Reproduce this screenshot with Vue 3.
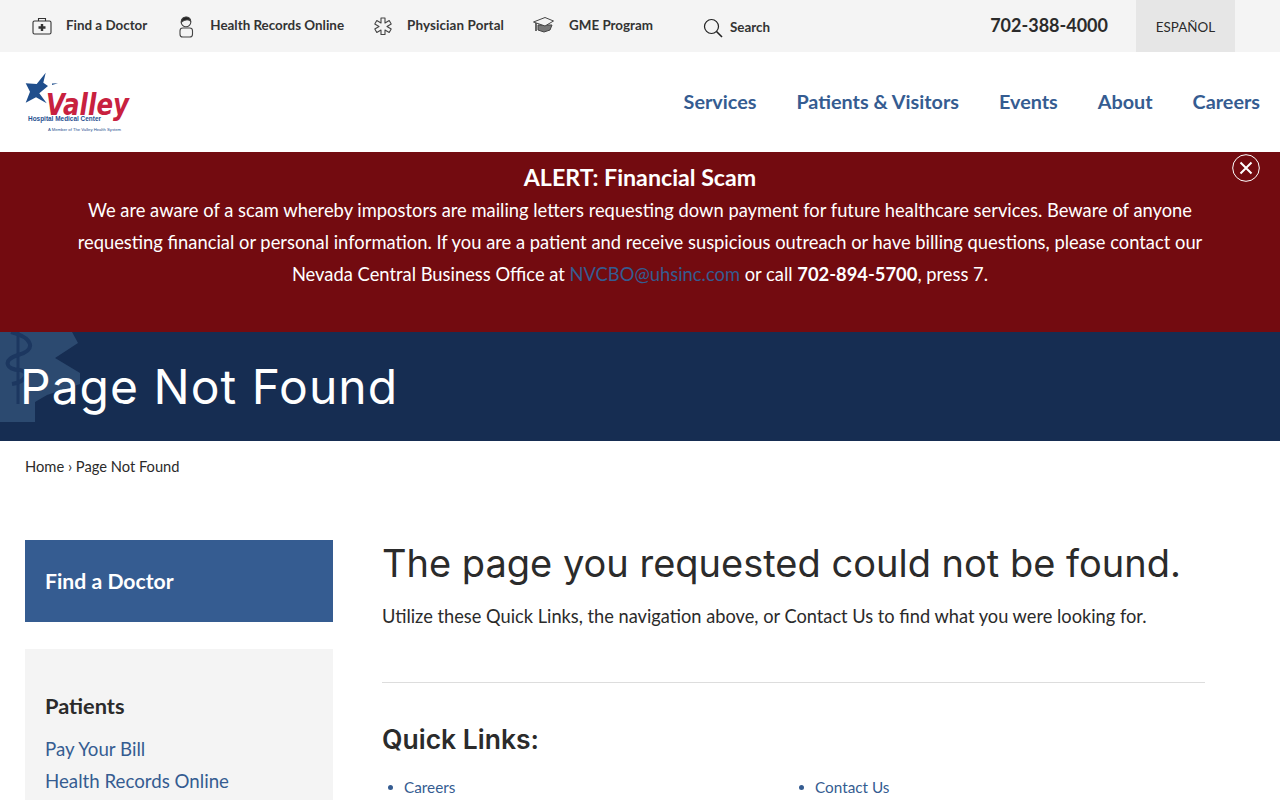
<template>
  <div class="page">
    <div class="topbar">
      <nav class="utility">
        <a class="util-link doctor">
          <svg width="22" height="22" viewBox="0 0 22 22" fill="none" stroke="#333" stroke-width="1.1">
            <rect x="2" y="6" width="18" height="13" rx="1.5" />
            <path d="M7.500 6V3.500h7V6" />
            <path d="M11 9v7M7.500 12.500h7" stroke-width="2.400" />
          </svg>
          <span>Find a Doctor</span>
        </a>
        <a class="util-link records">
          <svg width="22" height="24" viewBox="0 0 22 24" fill="none" stroke="#444" stroke-width="1.100">
            <circle cx="11" cy="8" r="4.800" />
            <path d="M6.400 8C6.500 1.500 15.500 1.500 15.600 7 13 5 9 6 6.400 8Z" fill="#222" />
            <rect x="5" y="14" width="12.500" height="9" rx="2.800" />
          </svg>
          <span>Health Records Online</span>
        </a>
        <a class="util-link portal">
          <svg width="20" height="20" viewBox="0 0 20 20" fill="none" stroke="#444" stroke-width="1.100" stroke-linejoin="round">
            <path d="M8 2h4v5l4.200-2.500 2 3.500L14 10.500l4.200 2.500-2 3.500L12 14v4.500H8V14l-4.200 2.500-2-3.500L6 10.500 1.800 8l2-3.500L8 7Z" />
          </svg>
          <span>Physician Portal</span>
        </a>
        <a class="util-link gme">
          <svg width="22" height="18" viewBox="0 0 22 18" fill="none" stroke="#444" stroke-width="1">
            <path d="M6 8v5l6 2 6-2 2-5Z" fill="#777" />
            <path d="M1.500 5 13 .5 21.500 4 13 9Z" fill="#f4f4f4" />
            <path d="M4 6v8" stroke-width="1.600" />
          </svg>
          <span>GME Program</span>
        </a>
        <a class="util-link search">
          <svg width="20" height="20" viewBox="0 0 20 20" fill="none" stroke="#222" stroke-width="1.200">
            <circle cx="8.500" cy="8.500" r="7" />
            <path d="M13.500 13.500 19 19" stroke-width="1.600" />
          </svg>
          <span>Search</span>
        </a>
      </nav>
      <div class="top-right">
        <a class="phone">702-388-4000</a>
        <a class="lang">ESPAÑOL</a>
      </div>
    </div>

    <header class="mainbar">
      <svg class="logo" width="106" height="62" viewBox="0 0 106 62">
        <path d="M20.700 1.700 18.300 11.700 23 15 14.300 22.300 21.700 32.300 11 26.300.7 31.700 5 20.700.7 12.300 11.700 13Z" fill="#1f4e8c" />
        <path d="M27 12.500 33 12.300 27 14Z" fill="#1f4e8c" />
        <text x="21" y="44" class="logo-name" textLength="83" lengthAdjust="spacingAndGlyphs">Valley</text>
        <text x="3" y="49.500" class="logo-sub" textLength="73" lengthAdjust="spacingAndGlyphs">Hospital Medical Center</text>
        <text x="23" y="59.500" class="logo-small" textLength="73" lengthAdjust="spacingAndGlyphs">A Member of The Valley Health System</text>
      </svg>
      <nav class="mainnav">
        <a v-for="item in navItems" :key="item">{{ item }}</a>
      </nav>
    </header>

    <section class="alert">
      <h2>ALERT: Financial Scam</h2>
      <p>
        We are aware of a scam whereby impostors are mailing letters requesting down payment for future
        healthcare services. Beware of anyone requesting financial or personal information. If you are a
        patient and receive suspicious outreach or have billing questions, please contact our Nevada Central
        Business Office at <a class="mail">NVCBO@uhsinc.com</a> or call <strong>702-894-5700</strong>, press 7.
      </p>
      <button class="close" aria-label="Close">
        <svg width="28" height="28" viewBox="0 0 28 28" fill="none" stroke="#fff">
          <circle cx="14" cy="14" r="13.300" stroke-width="1" />
          <path d="M8.500 8.500l11 11M19.500 8.500l-11 11" stroke-width="2" />
        </svg>
      </button>
    </section>

    <section class="titlebar">
      <svg class="star" width="82" height="92" viewBox="0 0 82 92">
        <path d="M0 0H72L78 11 55 26 80 41V52L47 63 35 70V90H0Z" fill="#2c4a70" />
        <path d="M18 0V72" stroke="#1c3760" stroke-width="3" />
        <path d="M11 0C34 6 36 18 18 23 2 28 6 38 20 38 30 40 26 50 12 52" fill="none" stroke="#1c3760" stroke-width="4" />
      </svg>
      <h1>Page Not Found</h1>
    </section>

    <div class="crumbs">Home › Page Not Found</div>

    <div class="content">
      <aside class="side">
        <a class="side-cta">Find a Doctor</a>
        <div class="side-box">
          <h3>Patients</h3>
          <a v-for="link in patientLinks" :key="link">{{ link }}</a>
        </div>
      </aside>
      <main class="body">
        <h2 class="headline">The page you requested could not be found.</h2>
        <p class="lead">Utilize these Quick Links, the navigation above, or Contact Us to find what you were looking for.</p>
        <hr />
        <h3 class="quick">Quick Links:</h3>
        <ul class="links">
          <li v-for="link in quickLinks" :key="link"><a>{{ link }}</a></li>
        </ul>
      </main>
    </div>
  </div>
</template>

<script setup>
const navItems = ['Services', 'Patients & Visitors', 'Events', 'About', 'Careers']
const patientLinks = ['Pay Your Bill', 'Health Records Online']
const quickLinks = ['Careers', 'Contact Us']
</script>

<style>
html, body { margin: 0; overflow: hidden; }
</style>

<style scoped>
.page {
  height: 800px;
  overflow: hidden;
  font-family: "Lato", "Noto Sans", sans-serif;
  color: #2b2b2b;
  background: #fff;
}
a { text-decoration: none; color: inherit; }

.topbar {
  height: 52px;
  background: #f4f4f4;
  display: flex;
  justify-content: space-between;
}
.utility { display: flex; align-items: center; padding-left: 31px; }
.util-link {
  display: flex;
  align-items: center;
  font-size: 13.400px;
  font-weight: 700;
  color: #333;
  margin-right: 28px;
  white-space: nowrap;
}
.util-link span { margin-left: 13px; margin-top: -3px; }
.records { margin-right: 29px; }
.portal span { margin-left: 14px; letter-spacing: 0.12px; }
.gme { margin-right: 50px; }
.gme span { margin-left: 15px; }
.search { padding-top: 3px; margin-right: 0; }
.search span { margin-left: 7px; margin-top: -1px; }
.top-right { display: flex; align-items: stretch; margin-right: 45px; }
.phone { font-size: 18px; font-weight: 700; line-height: 51px; margin-right: 28px; }
.lang {
  width: 99px;
  background: #e6e6e6;
  font-size: 13.400px;
  line-height: 54px;
  text-align: center;
}

.mainbar {
  height: 100px;
  display: flex;
  justify-content: space-between;
  align-items: center;
  padding: 0 20px 0 25px;
}
.logo { overflow: visible; }
.logo-name { font: italic 700 30px "DejaVu Sans", sans-serif; fill: #c8213f; }
.logo-sub { font: 700 6.500px "Liberation Sans", sans-serif; fill: #27508f; }
.logo-small { font: 4px "Liberation Sans", sans-serif; fill: #27508f; }
.mainnav { display: flex; gap: 40px; margin-top: -2px; }
.mainnav a { font-size: 19.800px; font-weight: 700; color: #355c91; white-space: nowrap; }

.alert {
  position: relative;
  height: 180px;
  box-sizing: border-box;
  padding: 10px 70px 0;
  background: #730b10;
  color: #fff;
  text-align: center;
}
.alert h2 { margin: -1px 0 1px; font-size: 23.200px; font-weight: 700; line-height: 32px; }
.alert p { margin: 0 auto; font-size: 18.350px; line-height: 32px; }
.mail { color: #355c91; }
.close {
  position: absolute;
  top: 2px;
  right: 20px;
  padding: 0;
  background: none;
  border: 0;
  line-height: 0;
}

.titlebar {
  position: relative;
  height: 109px;
  background: #162d52;
  overflow: hidden;
  display: flex;
  align-items: center;
  padding-left: 20px;
}
.star { position: absolute; left: 0; top: 0; }
.titlebar h1 {
  position: relative;
  margin: 0;
  font-family: "Inter", sans-serif;
  font-size: 48px;
  font-weight: 400;
  letter-spacing: 1px;
  color: #fff;
}

.crumbs { padding: 16px 25px 0; font-size: 14.700px; line-height: 18px; }

.content { display: flex; padding: 65px 75px 0 25px; gap: 49px; }
.side { width: 308px; flex: none; }
.side-cta {
  display: block;
  height: 82px;
  line-height: 82px;
  padding-left: 20px;
  background: #355c91;
  color: #fff;
  font-size: 21.200px;
  font-weight: 700;
}
.side-box { margin-top: 27px; padding: 41px 20px; background: #f4f4f4; }
.side-box h3 { margin: 0 0 11px; font-size: 21.800px; font-weight: 700; line-height: 32px; }
.side-box a { display: block; font-size: 18.700px; line-height: 32px; color: #355c91; }

.body { flex: 1; }
.headline { margin: 0; font-family: "Inter", sans-serif; font-size: 38px; font-weight: 400; line-height: 46px; }
.lead { margin: 14px 0 0; font-size: 18.240px; line-height: 32px; }
.body hr { margin: 50px 0 0; border: 0; border-top: 1px solid #ddd; }
.quick { margin: 38px 0 0; font-family: "Inter", sans-serif; font-size: 26.500px; font-weight: 600; line-height: 36px; }
.links { list-style: none; margin: 18px 0 0; padding: 0; display: grid; grid-template-columns: 411px 1fr; }
.links li { padding-left: 22px; font-size: 15.300px; line-height: 24px; color: #355c91; position: relative; }
.links li::before {
  content: "";
  position: absolute;
  left: 6px;
  top: 10px;
  width: 5px;
  height: 5px;
  border-radius: 50%;
  background: #355c91;
}
</style>
